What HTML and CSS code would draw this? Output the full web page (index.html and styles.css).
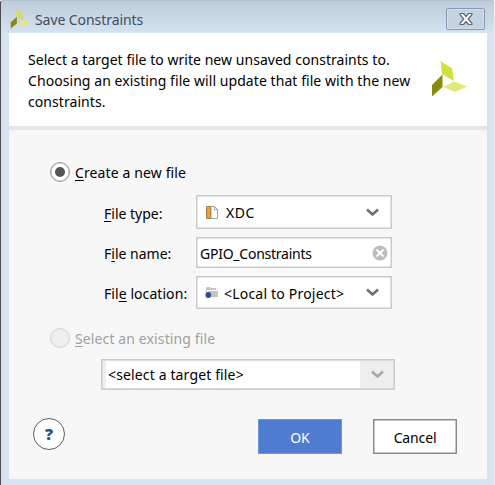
FILE: index.html
```html
<!DOCTYPE html>
<html lang="en">
<head>
<meta charset="utf-8">
<title>Save Constraints</title>
<link rel="stylesheet" href="styles.css">
</head>
<body>
<div class="window">
  <header class="titlebar">
    <svg class="app-icon" width="21" height="20" viewBox="0 0 35 36"><path fill="#d9dc55" d="M9 0 20 7 23 20 11 13z"/><path fill="#888b0d" d="M0 24 11 14V26L0 35z"/><path fill="#e1e58d" d="M11 26 22 20 35 25 23 31z"/></svg>
    <h1 class="title">Save Constraints</h1>
    <button class="close" aria-label="Close"><svg width="16" height="14" viewBox="0 0 16 14"><path d="M2 1.500H5.500L8 4.500 10.500 1.500H14V2.500L10.300 7 14 11.500V12.500H10.500L8 9.500 5.500 12.500H2V11.500L5.700 7 2 2.500z" fill="#fff" stroke="#606978" stroke-width="1.200" stroke-linejoin="round"/></svg></button>
  </header>
  <main class="dialog">
    <section class="intro">
      <p><span class="l1">Select a target file to write new unsaved constraints to.</span><br><span class="l2">Choosing an existing file will update that file with the new</span><br><span class="l2">constraints.</span></p>
      <svg class="logo" width="36" height="36" viewBox="0 0 36 36"><path fill="#d5df3b" d="M8.500 0 20 7.500 22 20 10 13z"/><path fill="#888b0d" d="M0 24 10.500 13.500V26L0 35.500z"/><path fill="#e2e979" d="M11 26 22 20.500 35 25.500 23 31z"/></svg>
    </section>
    <form class="form">
      <label class="choice"><span class="radio on"></span><span class="t-create"><u>C</u>reate a new file</span></label>
      <div class="fields">
        <span class="label"><u>F</u>ile type:</span>
        <div class="box type">
          <svg class="ico" width="14" height="15" viewBox="0 0 14 15"><path d="M6 1.500H9.500L12.500 4.500V13.500H6z" fill="#fff" stroke="#a5a5a5"/><path d="M9.500 1.500V4.500H12.500" fill="none" stroke="#a5a5a5"/><path d="M1.500 1.500H5.500V13.500H1.500z" fill="#f7a63c" stroke="#a58145"/><path d="M2 3.500H3.500M2 5.500H3.500M2 7.500H3.500M2 9.500H3.500M2 11.500H3.500" stroke="#d08a30"/></svg>
          <span class="t-xdc">XDC</span>
          <svg class="chev" width="13" height="9" viewBox="0 0 13 9"><path d="M1 1.500 6.500 6.500 12 1.500" fill="none" stroke="#707070" stroke-width="2.700"/></svg>
        </div>
        <span class="label">F<u>i</u>le name:</span>
        <div class="box name"><span class="t-gpio">GPIO_Constraints</span>
          <svg class="clear" width="16" height="16" viewBox="0 0 16 16"><circle cx="8" cy="8" r="7.500" fill="#bdbdbd"/><path d="M4.500 4.500 11.500 11.500M11.500 4.500 4.500 11.500" stroke="#fff" stroke-width="1.800"/></svg>
        </div>
        <span class="label t-loc">Fil<u>e</u> location:</span>
        <div class="box loc">
          <svg class="ico" width="14" height="13" viewBox="0 0 14 13"><path d="M1 2Q1 1 2 1H5L6 2H10.500Q11.500 2 11.500 3V4H1z" fill="#c4c4c4"/><path d="M3.500 5H13V11H4z" fill="#c4c4c4"/><path d="M1.500 4V7" stroke="#c4c4c4"/><circle cx="3.300" cy="9" r="2.900" fill="#2e4f8f"/></svg>
          <span class="t-local">&lt;Local to Project&gt;</span>
          <svg class="chev" width="13" height="9" viewBox="0 0 13 9"><path d="M1 1.500 6.500 6.500 12 1.500" fill="none" stroke="#707070" stroke-width="2.700"/></svg>
        </div>
      </div>
      <label class="choice off"><span class="radio"></span><span class="t-exist"><u>S</u>elect an existing file</span></label>
      <div class="box target"><span class="value"><span class="t-target">&lt;select a target file&gt;</span></span>
        <span class="drop"><svg width="13" height="9" viewBox="0 0 13 9"><path d="M1 1.500 6.500 6.500 12 1.500" fill="none" stroke="#a9a9a9" stroke-width="2.700"/></svg></span>
      </div>
    </form>
    <footer class="actions">
      <button class="help">?</button>
      <button class="btn ok"><span class="t-ok">OK</span></button>
      <button class="btn cancel"><span class="t-cancel">Cancel</span></button>
    </footer>
  </main>
</div>
</body>
</html>
```
FILE: styles.css
```css
* { box-sizing: border-box; }
body { margin: 0; font: 14px/21px "Noto Sans", "Open Sans", sans-serif; color: #000; }
button { font: inherit; padding: 0; }
u { text-decoration-thickness: 1px; text-underline-offset: 2px; text-decoration-skip-ink: none; }
span { white-space: nowrap; }

.window { width: 495px; height: 485px; padding: 0 7px 6px 8px; overflow: hidden; border-left: 1px solid #4c4c50; border-right: 1px solid #e8f0f8; border-top: 1px solid #b4c2d0; border-radius: 3px 3px 0 0; background: linear-gradient(#bfcddb, #d6e3f0 34px, #d6e3f0); }
.titlebar { height: 32px; display: flex; align-items: flex-start; padding: 7px 2px 0 1px; }
.app-icon { margin-top: 1px; }
.title { margin: 0 0 0 4px; font-size: 14px; line-height: 24px; font-weight: 400; color: #414d5c; letter-spacing: -0.07px; }
.close { margin-left: auto; width: 39px; height: 22px; border: 1px solid #8798b2; border-radius: 2px; background: #c5d2e0; display: flex; align-items: center; justify-content: center; box-shadow: inset 0 0 0 1px #d4dfea; }

.dialog { width: 478px; height: 446px; background: #f7f7f7; }
.intro { height: 97px; background: #fff; border-bottom: 4px solid #e6e6e6; display: flex; justify-content: space-between; padding: 16px 19px 0 19px; }
.intro p { margin: 0; white-space: nowrap; }
.logo { margin-top: 12px; }
.l1 { letter-spacing: 0.04px; }
.l2 { letter-spacing: 0.065px; }

.form { padding: 31px 0 0 41px; }
.choice { display: flex; align-items: center; height: 21px; gap: 5px; }
.radio { width: 20px; height: 20px; border: 1px solid #a0a0a0; border-radius: 50%; background: #fff; box-shadow: inset 0 0 0 0.5px #b0b0b0; display: flex; align-items: center; justify-content: center; }
.radio.on::before { content: ""; width: 10px; height: 10px; border-radius: 50%; background: #555; }
.off { color: #a0a0a0; }
.off .radio { border-color: #d0d0d0; background: #efeff0; box-shadow: none; }
.t-create { padding-top: 2px; letter-spacing: 0.12px; }
.t-exist { padding-top: 2px; letter-spacing: 0.12px; }

.fields { display: grid; grid-template-columns: 92px 196px; grid-template-rows: 34px 31px 33px; row-gap: 8px; padding: 13px 0 0 54px; }
.label { align-self: center; padding-top: 2px; }
.t-loc { letter-spacing: 0.07px; }
.box { border: 1px solid #cacaca; background: #fff; display: flex; align-items: center; box-shadow: inset 0 0 0 0.5px #cacaca; }
.type, .loc { padding: 0 12px 0 8px; }
.type .ico { margin-right: 7px; }
.loc .ico { margin-right: 5px; }
.chev { margin-left: auto; }
.name { padding: 0 3px 0 3px; }
.clear { margin-left: auto; }
.t-xdc { letter-spacing: 0.6px; padding-top: 1px; }
.t-gpio { letter-spacing: -0.25px; padding-top: 2px; }
.t-local { letter-spacing: 0.2px; padding-top: 2px; }
.t-target { letter-spacing: 0.14px; }
.fields + .choice { margin-top: 18px; }
.target { width: 294px; height: 31px; margin: 11px 0 0 51px; padding-left: 4px; background: #eee; }
.value { flex: 1; height: 27px; line-height: 28px; background: #fff; padding-left: 2px; }
.drop { width: 34px; display: flex; justify-content: center; }

.actions { display: flex; align-items: flex-start; padding: 28px 30px 0 24px; }
.help { width: 32px; height: 32px; border: 1px solid #606060; border-radius: 50%; background: #fff; color: #2d4f94; font: 800 16px/31px "Open Sans", "Noto Sans", sans-serif; }
.btn { width: 84px; height: 35px; margin-top: 1px; }
.btn span { position: relative; top: 1px; }
.ok { margin-left: auto; margin-right: 31px; background: #4f7cd1; color: #fff; border: 1px solid #7095dc; }
.cancel { background: #fff; border: 1px solid #8a8a8a; box-shadow: inset 0 0 0 0.5px #8a8a8a; color: #000; letter-spacing: -0.15px; }
```
